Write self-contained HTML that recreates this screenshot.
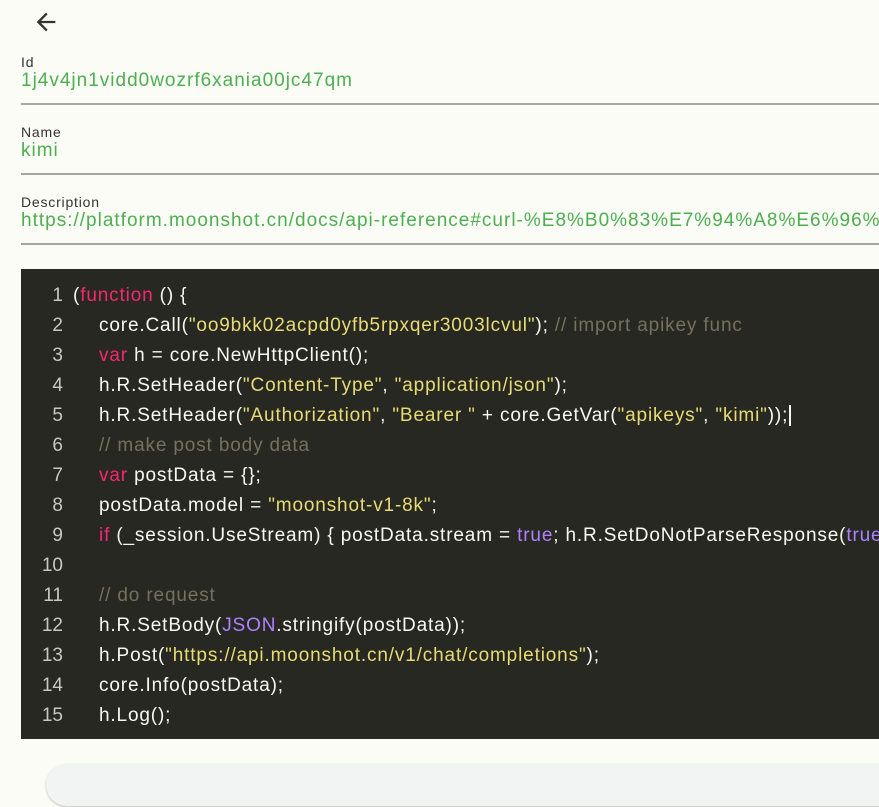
<!DOCTYPE html>
<html><head><meta charset="utf-8"><style>
html,body{margin:0;padding:0;background:#fcfcf7;width:879px;height:807px;overflow:hidden;font-family:"Liberation Sans",sans-serif}
.back{position:absolute;left:32px;top:8px}
.f{position:absolute;left:21px;right:0}
.f .l{font-size:14px;color:#333;line-height:16px;letter-spacing:0.8px}
.f .v{font-size:19px;color:#4caf50;line-height:22px;white-space:nowrap;overflow:hidden;letter-spacing:1px}
.f .u{position:absolute;left:0;right:0;height:2px;background:#a3a6a1}
.code{position:absolute;left:21px;top:269px;width:858px;height:470px;background:#272822;overflow:hidden;box-sizing:border-box;padding-top:12px}
.ln{height:30px;line-height:30px;font-size:19px;letter-spacing:0.85px;color:#f8f8f2;white-space:nowrap;position:relative}
.n{position:absolute;left:0;width:42px;text-align:right;color:#c8c8c0;letter-spacing:0}
.c{position:absolute;left:52px}
.i{padding-left:26px}
.k{color:#f92672}.s{color:#e6db74}.m{color:#75715e}.p{color:#ae81ff}
.bot{position:absolute;left:46px;top:764px;width:900px;height:42px;border-radius:21px;background:#f1f4f2;box-shadow:0 1px 2px rgba(0,0,0,.25)}
</style></head><body>
<svg class="back" width="28" height="28" viewBox="0 0 24 24"><path d="M20 11H7.83l5.59-5.59L12 4l-8 8 8 8 1.41-1.41L7.83 13H20v-2z" fill="#333"/></svg>
<div class="f" style="top:54px"><div class="l">Id</div><div class="v">1j4v4jn1vidd0wozrf6xania00jc47qm</div><div class="u" style="top:49px"></div></div>
<div class="f" style="top:124px"><div class="l">Name</div><div class="v">kimi</div><div class="u" style="top:49px"></div></div>
<div class="f" style="top:194px"><div class="l">Description</div><div class="v">https://platform.moonshot.cn/docs/api-reference#curl-%E8%B0%83%E7%94%A8%E6%96%B9%E5%BC%8F</div><div class="u" style="top:49px"></div></div>
<div class="code">
<div class="ln"><span class="n">1</span><span class="c">(<span class="k">function</span> () {</span></div>
<div class="ln"><span class="n">2</span><span class="c i">core.Call(<span class="s">"oo9bkk02acpd0yfb5rpxqer3003lcvul"</span>); <span class="m">// import apikey func</span></span></div>
<div class="ln"><span class="n">3</span><span class="c i"><span class="k">var</span> h = core.NewHttpClient();</span></div>
<div class="ln"><span class="n">4</span><span class="c i">h.R.SetHeader(<span class="s">"Content-Type"</span>, <span class="s">"application/json"</span>);</span></div>
<div class="ln"><span class="n">5</span><span class="c i">h.R.SetHeader(<span class="s">"Authorization"</span>, <span class="s">"Bearer "</span> + core.GetVar(<span class="s">"apikeys"</span>, <span class="s">"kimi"</span>));<span style="border-left:2px solid #f8f8f2;margin-left:1px"></span></span></div>
<div class="ln"><span class="n">6</span><span class="c i"><span class="m">// make post body data</span></span></div>
<div class="ln"><span class="n">7</span><span class="c i"><span class="k">var</span> postData = {};</span></div>
<div class="ln"><span class="n">8</span><span class="c i">postData.model = <span class="s">"moonshot-v1-8k"</span>;</span></div>
<div class="ln"><span class="n">9</span><span class="c i"><span class="k">if</span> (_session.UseStream) { postData.stream = <span class="p">true</span>; h.R.SetDoNotParseResponse(<span class="p">true</span>); }</span></div>
<div class="ln"><span class="n">10</span><span class="c i"></span></div>
<div class="ln"><span class="n">11</span><span class="c i"><span class="m">// do request</span></span></div>
<div class="ln"><span class="n">12</span><span class="c i">h.R.SetBody(<span class="p">JSON</span>.stringify(postData));</span></div>
<div class="ln"><span class="n">13</span><span class="c i">h.Post(<span class="s">"https://api.moonshot.cn/v1/chat/completions"</span>);</span></div>
<div class="ln"><span class="n">14</span><span class="c i">core.Info(postData);</span></div>
<div class="ln"><span class="n">15</span><span class="c i">h.Log();</span></div>
</div>
<div class="bot"></div>
</body></html>
